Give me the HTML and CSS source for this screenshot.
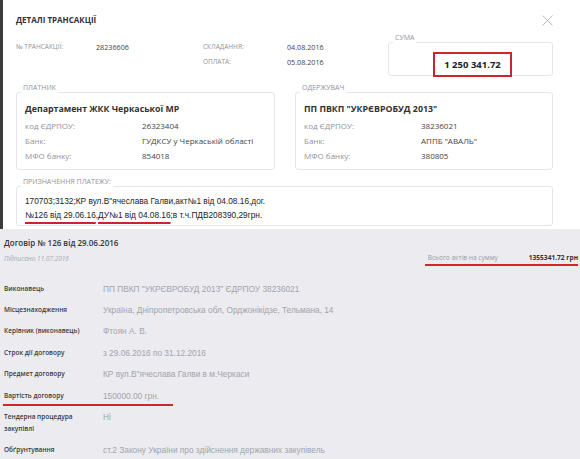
FILE: index.html
```html
<!DOCTYPE html>
<html lang="uk">
<head>
    <meta charset="UTF-8">
    <meta name="viewport" content="width=device-width, initial-scale=1.0">
    <title>Деталі трансакції</title>
    <link rel="stylesheet" href="styles.css">
</head>
<body>

    <div class="modal">
        <div class="modal-head">
            <h1 class="title">ДЕТАЛІ ТРАНСАКЦІЇ</h1>
            <span class="close">
                <svg width="11" height="11" viewBox="0 0 11 11"><path d="M0.5 0.5 L10.5 10.5 M10.5 0.5 L0.5 10.5" stroke="#b9bcc2" stroke-width="1" fill="none"/></svg>
            </span>
        </div>

        <div class="meta">
            <div class="meta-grid">
                <span class="lbl">№ ТРАНСАКЦІЇ:</span><span class="val">28236606</span>
                <span class="lbl">СКЛАДАННЯ:</span><span class="val">04.08.2016</span>
                <span></span><span></span>
                <span class="lbl">ОПЛАТА:</span><span class="val">05.08.2016</span>
            </div>
            <fieldset class="box sum-box">
                <legend>СУМА</legend>
                <div class="sum">1 250 341.72</div>
            </fieldset>
        </div>

        <div class="parties">
            <fieldset class="box party">
                <legend>ПЛАТНИК</legend>
                <div class="party-name">Департамент ЖКК Черкаської МР</div>
                <div class="party-row"><span class="lbl">код ЄДРПОУ:</span><span class="val">26323404</span></div>
                <div class="party-row"><span class="lbl">Банк:</span><span class="val">ГУДКСУ у Черкаській області</span></div>
                <div class="party-row"><span class="lbl">МФО банку:</span><span class="val">854018</span></div>
            </fieldset>
            <fieldset class="box party">
                <legend>ОДЕРЖУВАЧ</legend>
                <div class="party-name">ПП ПВКП "УКРЄВРОБУД 2013"</div>
                <div class="party-row"><span class="lbl">код ЄДРПОУ:</span><span class="val">38236021</span></div>
                <div class="party-row"><span class="lbl">Банк:</span><span class="val">АППБ "АВАЛЬ"</span></div>
                <div class="party-row"><span class="lbl">МФО банку:</span><span class="val">380805</span></div>
            </fieldset>
        </div>

        <fieldset class="box purpose">
            <legend>ПРИЗНАЧЕННЯ ПЛАТЕЖУ:</legend>
            <div class="purpose-text">170703;3132;КР вул.В"ячеслава Галви,акт№1 від 04.08.16,дог.<br><span class="mark">№126 від 29.06.16</span>,<span class="mark">ДУ№1 від 04.08.16</span>;в т.ч.ПДВ208390,29грн.</div>
        </fieldset>
    </div>

    <div class="contract">
        <div class="contract-head">
            <div>
                <div class="contract-title">Договір № 126 від 29.06.2016</div>
                <div class="signed">Підписано 11.07.2016</div>
            </div>
            <div class="acts">
                <span class="acts-lbl">Всього актів на сумму</span>
                <span class="acts-val">1355341.72 грн</span>
            </div>
        </div>

        <div class="rows">
            <div class="row"><span class="row-lbl">Виконавець</span><span class="row-val">ПП ПВКП "УКРЄВРОБУД 2013" ЄДРПОУ 38236021</span></div>
            <div class="row"><span class="row-lbl">Місцезнаходження</span><span class="row-val">Україна, Дніпропетровська обл, Орджонікідзе, Тельмана, 14</span></div>
            <div class="row"><span class="row-lbl">Керівник (виконавець)</span><span class="row-val">Фтоян А. В.</span></div>
            <div class="row"><span class="row-lbl">Строк дії договору</span><span class="row-val">з 29.06.2016 по 31.12.2016</span></div>
            <div class="row"><span class="row-lbl">Предмет договору</span><span class="row-val">КР вул.В"ячеслава Галви в м.Черкаси</span></div>
            <div class="row marked"><span class="row-lbl">Вартість договору</span><span class="row-val">150000.00 грн.</span></div>
            <div class="row"><span class="row-lbl">Тендерна процедура закупівлі</span><span class="row-val">Ні</span></div>
            <div class="row"><span class="row-lbl">Обґрунтування</span><span class="row-val">ст.2 Закону України про здійснення державних закупівель</span></div>
        </div>
    </div>

</body>
</html>
```

FILE: styles.css
```css
body {
    margin: 0;
    font-family: "Open Sans", "Noto Sans", sans-serif;
    background-color: #ebebf0;
    color: #333;
}

.modal {
    background: #fff;
    border-left: 3px solid #3b3b3b;
    padding: 15px 27px 3px 13px;
    height: 229px;
    box-sizing: border-box;
}

.modal-head {
    display: flex;
    justify-content: space-between;
    align-items: flex-start;
}

.title {
    margin: 0;
    font-size: 8px;
    line-height: 10px;
    font-weight: 700;
    color: #333;
}

.close {
    margin-top: 0;
    line-height: 0;
}

.meta {
    display: flex;
    margin-top: 8px;
}

.meta-grid {
    display: grid;
    grid-template-columns: 80px 107px 84px 101px;
    grid-auto-rows: 15px;
    align-items: center;
    margin-top: 5px;
}

.lbl {
    font-size: 6.5px;
    color: #8e939c;
}

.val {
    font-size: 7.2px;
    color: #444;
}

.box {
    margin: 0;
    padding: 0;
    border: 1px solid #e3e6ec;
    border-radius: 3px;
    min-width: 0;
}

.box legend {
    margin-left: 4px;
    padding: 0 2px 8px;
    font-size: 7px;
    line-height: 8px;
    color: #8e939c;
}

.sum-box {
    width: 165px;
    height: 42px;
    box-sizing: border-box;
    display: flex;
    justify-content: center;
    align-items: center;
}

.sum {
    border: 2px solid #cb2530;
    width: 79px;
    height: 25px;
    box-sizing: border-box;
    margin: 4px 0 0 4px;
    font-size: 9.5px;
    font-weight: 700;
    line-height: 21px;
    text-align: center;
    color: #222;
}

.parties {
    display: flex;
    gap: 20px;
    margin-top: 8px;
}

.party {
    width: 259px;
    height: 86px;
    box-sizing: border-box;
    padding: 3px 8px 0;
}

.party + .party {
    width: 258px;
}

.party legend,
.purpose legend {
    margin-left: -4px;
}

.party-name {
    font-weight: 700;
    font-size: 8.8px;
    line-height: 12px;
    color: #333;
    margin-bottom: 3px;
}

.party-row {
    display: grid;
    grid-template-columns: 117px 1fr;
    line-height: 15px;
}

.party-row .lbl,
.party-row .val {
    font-size: 8px;
}

.purpose {
    margin-top: 8px;
    width: 537px;
    height: 48px;
    box-sizing: border-box;
    padding: 0 8px;
}

.purpose-text {
    font-family: "Liberation Sans", Arial, sans-serif;
    font-size: 8.3px;
    line-height: 14px;
    color: #222;
}

.mark {
    text-decoration: underline;
    text-decoration-color: #d0222c;
    text-decoration-thickness: 2px;
    text-underline-offset: 4px;
}

.contract {
    padding: 8px 2px 0 4px;
}

.contract-head {
    display: flex;
    justify-content: space-between;
    align-items: flex-end;
}

.contract-title {
    font-size: 8px;
    font-weight: 600;
    line-height: 12px;
    color: #333;
}

.signed {
    margin: 6px 0 3px;
    font-size: 6.5px;
    font-style: italic;
    line-height: 8px;
    color: #a9abb3;
}

.acts {
    display: flex;
    gap: 31px;
    padding: 0 0 1px 3px;
    border-bottom: 2px solid #cf2630;
    font-size: 6.6px;
    line-height: 10px;
}

.acts-lbl {
    color: #9a9ca4;
}

.acts-val {
    font-weight: 700;
    color: #333;
}

.rows {
    margin-top: 12px;
}

.row {
    display: grid;
    grid-template-columns: 99px 1fr;
    padding: 4.7px 0;
    line-height: 12px;
}

.row-lbl {
    font-size: 6.5px;
    font-weight: 600;
    color: #3a3a3a;
    padding-right: 10px;
}

.row-val {
    font-family: "Liberation Sans", Arial, sans-serif;
    font-size: 8.3px;
    color: #a3a4ac;
}

.row.marked {
    width: 169px;
    margin-left: -1px;
    padding-left: 1px;
    padding-bottom: 2.7px;
    border-bottom: 2px solid #cf2630;
}
```
